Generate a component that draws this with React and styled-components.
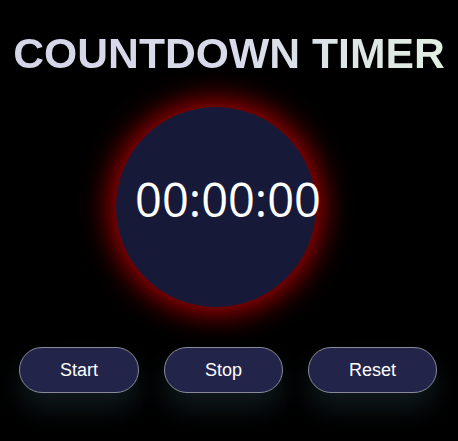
import React from 'react';
import styled, { createGlobalStyle } from 'styled-components';

const GlobalStyle = createGlobalStyle`
  html, body {
    margin: 0;
    padding: 0;
    background: #000;
  }
  body {
    font-family: 'Liberation Sans', Arial, sans-serif;
  }
`;

const Page = styled.div`
  min-height: 441px;
  background: #000;
  display: flex;
  flex-direction: column;
  align-items: center;
  padding-top: 29px;
  box-sizing: border-box;
`;

const Title = styled.h1`
  margin: 0;
  font-family: 'Liberation Sans', Arial, sans-serif;
  font-weight: 700;
  font-size: 42.7px;
  line-height: 48px;
  background: linear-gradient(90deg, #d5d5e8 0%, #d9dcea 55%, #e2efe2 100%);
  -webkit-background-clip: text;
  background-clip: text;
  color: transparent;
  white-space: nowrap;
`;

const Dial = styled.div`
  width: 200px;
  height: 200px;
  margin-top: 30px;
  margin-right: 26px;
  border-radius: 50%;
  background: #171939;
  box-shadow: 0 0 30px 6px #b00000;
  display: flex;
  align-items: center;
  justify-content: center;
`;

const Time = styled.span`
  font-family: 'Open Sans', 'Noto Sans', sans-serif;
  font-size: 47px;
  line-height: 1;
  color: #fff;
  margin-left: 24px;
  margin-bottom: 16px;
  white-space: nowrap;
`;

const Controls = styled.div`
  display: flex;
  gap: 25px;
  margin-top: 40px;
  margin-right: 2px;
`;

const Button = styled.button`
  font-family: 'Liberation Sans', Arial, sans-serif;
  font-size: 18px;
  color: #fff;
  background: #23244a;
  border: 1px solid #8a8a9a;
  border-radius: 23px;
  height: 46px;
  padding: 0 40px;
  box-shadow: 0 16px 26px rgba(60, 100, 115, 0.25);
  cursor: pointer;
`;

export default function App() {
  return (
    <>
      <GlobalStyle />
      <Page>
        <Title>COUNTDOWN TIMER</Title>
        <Dial>
          <Time>00:00:00</Time>
        </Dial>
        <Controls>
          <Button>Start</Button>
          <Button>Stop</Button>
          <Button>Reset</Button>
        </Controls>
      </Page>
    </>
  );
}
